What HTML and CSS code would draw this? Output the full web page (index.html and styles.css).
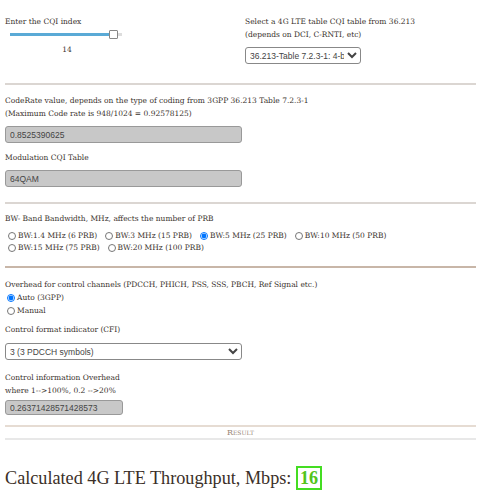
FILE: index.html
```html
<!DOCTYPE html>
<html lang="en">
<head>
  <meta charset="UTF-8" />
  <title>4G LTE Throughput Calculator</title>
  <link rel="stylesheet" href="styles.css">
</head>
<body>

  <div class="top">
    <div class="col">
      <div class="label">Enter the CQI index</div>
      <div class="slider">
        <div class="track"><div class="fill"></div><div class="thumb"></div></div>
      </div>
      <div class="slider-value">14</div>
    </div>
    <div class="col">
      <div class="label">Select a 4G LTE table CQI table from 36.213<br>(depends on DCI, C-RNTI, etc)</div>
      <select class="table-select">
        <option>36.213-Table 7.2.3-1: 4-bit CQI Table</option>
      </select>
    </div>
  </div>

  <hr class="sep">

  <div class="section coderate">
    <div class="label">CodeRate value, depends on the type of coding from 3GPP 36.213 Table 7.2.3-1<br>(Maximum Code rate is 948/1024 = 0.92578125)</div>
    <input class="field" type="text" value="0.8525390625" readonly>
    <div class="label">Modulation CQI Table</div>
    <input class="field" type="text" value="64QAM" readonly>
  </div>

  <hr class="sep">

  <div class="section bandwidth">
    <div class="label">BW- Band Bandwidth, MHz, affects the number of PRB</div>
    <div class="radios">
      <label><input type="radio" name="bw">BW:1.4 MHz (6 PRB)</label>
      <label><input type="radio" name="bw">BW:3 MHz (15 PRB)</label>
      <label><input type="radio" name="bw" checked>BW:5 MHz (25 PRB)</label>
      <label><input type="radio" name="bw">BW:10 MHz (50 PRB)</label>
      <label><input type="radio" name="bw">BW:15 MHz (75 PRB)</label>
      <label><input type="radio" name="bw">BW:20 MHz (100 PRB)</label>
    </div>
  </div>

  <hr class="sep dark">

  <div class="section overhead">
    <div class="label">Overhead for control channels (PDCCH, PHICH, PSS, SSS, PBCH, Ref Signal etc.)</div>
    <div class="radios stacked">
      <label><input type="radio" name="ovh" checked>Auto (3GPP)</label>
      <label><input type="radio" name="ovh">Manual</label>
    </div>
    <div class="label">Control format indicator (CFI)</div>
    <select class="cfi-select">
      <option>3 (3 PDCCH symbols)</option>
    </select>
    <div class="label">Control information Overhead<br>where 1--&gt;100%, 0.2 --&gt;20%</div>
    <input class="field short" type="text" value="0.26371428571428573" readonly>
  </div>

  <div class="result-bar">Result</div>

  <h2 class="throughput">Calculated 4G LTE Throughput, Mbps: <span class="value">16</span></h2>

</body>
</html>
```
FILE: styles.css
```css
* {
  box-sizing: border-box;
}

body {
  margin: 0;
  padding: 0 5px;
  font-family: 'DejaVu Serif', serif;
  font-size: 7.5px;
  color: #3b332e;
  background: #fff;
}

.label {
  line-height: 13px;
}

.top {
  display: grid;
  grid-template-columns: 240px 1fr;
  padding-top: 15px;
  height: 83px;
}

.slider {
  padding: 5px 0 0 5px;
  width: 117px;
}

.track {
  position: relative;
  height: 3px;
  background: #ddd;
}

.fill {
  width: 100px;
  height: 3px;
  background: #5aaad6;
}

.thumb {
  position: absolute;
  left: 99px;
  top: -3px;
  width: 9px;
  height: 9px;
  background: #fff;
  border: 1px solid #888;
  border-radius: 1px;
}

.slider-value {
  width: 124px;
  text-align: center;
  margin-top: 7px;
  line-height: 13px;
}

select {
  display: block;
  font-family: 'Liberation Sans', sans-serif;
  font-size: 8.5px;
  color: #444;
  border: 1px solid #888;
  border-radius: 3px;
  background: #fff;
  height: 17px;
}

.table-select {
  width: 116px;
  margin-top: 6px;
}

.cfi-select {
  width: 237px;
  margin: 7px 0 11px;
}

.sep {
  border: none;
  height: 2px;
  background: #dbd6d2;
  margin: 0;
}

.sep.dark {
  background: #c8b6a8;
}

.coderate {
  padding: 9px 0 15px;
}

.bandwidth {
  padding: 8px 0 12px;
}

.overhead {
  padding: 10px 0 10px;
}

.field {
  display: block;
  width: 237px;
  height: 17px;
  margin: 6px 0 8px;
  padding: 0 4px;
  font-family: 'Liberation Sans', sans-serif;
  font-size: 8.5px;
  color: #444;
  background: #c8c8c8;
  border: 1px solid #999;
  border-radius: 3px;
}

.coderate .field:last-child {
  margin-bottom: 0;
}

.field.short {
  width: 118px;
  height: 15px;
  margin: 3px 0 0;
}

.radios {
  display: flex;
  flex-wrap: wrap;
  column-gap: 8px;
  line-height: 12px;
  padding-left: 3px;
  margin-top: 5px;
}

.radios.stacked {
  flex-direction: column;
  line-height: 13px;
  padding-left: 2px;
  margin: 0 0 6px;
}

.radios label {
  display: flex;
  align-items: center;
}

.radios input {
  width: 8px;
  height: 8px;
  margin: 0 2px 0 0;
}

.result-bar {
  border-top: 2px solid #e6dcd3;
  border-bottom: 2px solid #e8e8e8;
  text-align: center;
  font-variant: small-caps;
  color: #9a8878;
  font-size: 8px;
  line-height: 11px;
}

.throughput {
  font-family: 'Liberation Serif', serif;
  font-weight: normal;
  font-size: 18.2px;
  line-height: 24px;
  color: #3b2f28;
  margin: 26px 0 0;
}

.value {
  display: inline-block;
  color: #52c41a;
  font-weight: bold;
  border: 2px solid #44dd22;
  padding: 0 2px;
  line-height: 20px;
}
```
